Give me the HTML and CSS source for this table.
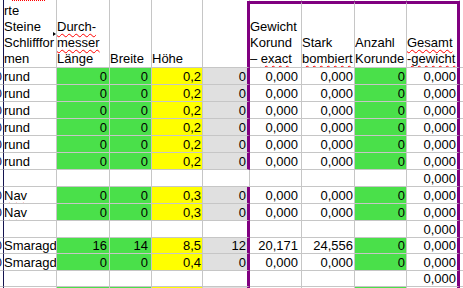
FILE: index.html
```html
<!DOCTYPE html>
<html lang="de">
<head>
<meta charset="utf-8">
<title>Steine</title>
<link rel="stylesheet" href="styles.css">
</head>
<body>
<div class="sheet">
  <!-- clipped strip of the row above -->
  <div class="s edge"></div>
  <div class="s"><div class="wave"></div></div>
  <div class="s"></div><div class="s"></div><div class="s"></div><div class="s"></div>
  <div class="s"></div><div class="s"></div><div class="s"></div><div class="s"></div>
  <div class="s end"></div>

  <!-- header -->
  <div class="h edge"></div>
  <div class="h ha"><div>rte</div><div>Steine</div><div>Schlifffor</div><div>men</div><span class="tri"></span></div>
  <div class="h"><div><span class="sp">Durch-</span></div><div><span class="sp">messer</span></div><div>Länge</div></div>
  <div class="h"><div>Breite</div></div>
  <div class="h"><div>Höhe</div></div>
  <div class="h pr"></div>
  <div class="h pt"><div>Gewicht</div><div>Korund</div><div>– <span class="sp">exact</span></div></div>
  <div class="h pt"><div>Stark</div><div><span class="sp">bombiert</span></div></div>
  <div class="h pt"><div>Anzahl</div><div>Korunde</div></div>
  <div class="h pt pr"><div><span class="sp">Gesamt</span></div><div><span class="sp">-gewicht</span></div></div>
  <div class="h end"></div>

  <!-- rows 1-6 -->
  <div class="c edge n"><span>0</span></div><div class="c">rund</div><div class="c n g p2">0</div><div class="c n g p3">0</div><div class="c n y p1">0,2</div><div class="c n k pr p1">0</div><div class="c n p3">0,000</div><div class="c n p1">0,000</div><div class="c n g p1">0</div><div class="c n pr p1">0,000</div><div class="c end"></div>
  <div class="c edge n"><span>0</span></div><div class="c">rund</div><div class="c n g p2">0</div><div class="c n g p3">0</div><div class="c n y p1">0,2</div><div class="c n k pr p1">0</div><div class="c n p3">0,000</div><div class="c n p1">0,000</div><div class="c n g p1">0</div><div class="c n pr p1">0,000</div><div class="c end"></div>
  <div class="c edge n"><span>0</span></div><div class="c">rund</div><div class="c n g p2">0</div><div class="c n g p3">0</div><div class="c n y p1">0,2</div><div class="c n k pr p1">0</div><div class="c n p3">0,000</div><div class="c n p1">0,000</div><div class="c n g p1">0</div><div class="c n pr p1">0,000</div><div class="c end"></div>
  <div class="c edge n"><span>0</span></div><div class="c">rund</div><div class="c n g p2">0</div><div class="c n g p3">0</div><div class="c n y p1">0,2</div><div class="c n k pr p1">0</div><div class="c n p3">0,000</div><div class="c n p1">0,000</div><div class="c n g p1">0</div><div class="c n pr p1">0,000</div><div class="c end"></div>
  <div class="c edge n"><span>0</span></div><div class="c">rund</div><div class="c n g p2">0</div><div class="c n g p3">0</div><div class="c n y p1">0,2</div><div class="c n k pr p1">0</div><div class="c n p3">0,000</div><div class="c n p1">0,000</div><div class="c n g p1">0</div><div class="c n pr p1">0,000</div><div class="c end"></div>
  <div class="c edge n"><span>0</span></div><div class="c">rund</div><div class="c n g p2">0</div><div class="c n g p3">0</div><div class="c n y p1">0,2</div><div class="c n k pr p1">0</div><div class="c n p3">0,000</div><div class="c n p1">0,000</div><div class="c n g p1">0</div><div class="c n pr p1">0,000</div><div class="c end"></div>

  <!-- row 7 empty -->
  <div class="c edge"></div><div class="c"></div><div class="c"></div><div class="c"></div><div class="c"></div><div class="c"></div><div class="c"></div><div class="c"></div><div class="c"></div><div class="c n pr p1">0,000</div><div class="c end"></div>

  <!-- rows 8-9 -->
  <div class="c edge n"><span>0</span></div><div class="c"><span class="sp">Nav</span></div><div class="c n g p2">0</div><div class="c n g p3">0</div><div class="c n y p1">0,3</div><div class="c n k pr p1">0</div><div class="c n p3">0,000</div><div class="c n p1">0,000</div><div class="c n g p1">0</div><div class="c n pr p1">0,000</div><div class="c end"></div>
  <div class="c edge n"><span>0</span></div><div class="c"><span class="sp">Nav</span></div><div class="c n g p2">0</div><div class="c n g p3">0</div><div class="c n y p1">0,3</div><div class="c n k pr p1">0</div><div class="c n p3">0,000</div><div class="c n p1">0,000</div><div class="c n g p1">0</div><div class="c n pr p1">0,000</div><div class="c end"></div>

  <!-- row 10 empty -->
  <div class="c edge"></div><div class="c"></div><div class="c"></div><div class="c"></div><div class="c"></div><div class="c pr"></div><div class="c"></div><div class="c"></div><div class="c"></div><div class="c n pr p1">0,000</div><div class="c end"></div>

  <!-- rows 11-12 -->
  <div class="c edge n"><span>0</span></div><div class="c">Smaragd</div><div class="c n g p2">16</div><div class="c n g p3">14</div><div class="c n y p1">8,5</div><div class="c n k pr p1">12</div><div class="c n p3">20,171</div><div class="c n p1">24,556</div><div class="c n g p1">0</div><div class="c n pr p1">0,000</div><div class="c end"></div>
  <div class="c edge n"><span>0</span></div><div class="c">Smaragd</div><div class="c n g p2">0</div><div class="c n g p3">0</div><div class="c n y p1">0,4</div><div class="c n k pr p1">0</div><div class="c n p3">0,000</div><div class="c n p1">0,000</div><div class="c n g p1">0</div><div class="c n pr p1">0,000</div><div class="c end"></div>

  <!-- row 13 empty -->
  <div class="c edge"></div><div class="c"></div><div class="c"></div><div class="c"></div><div class="c"></div><div class="c pr"></div><div class="c"></div><div class="c"></div><div class="c"></div><div class="c n pr p1">0,000</div><div class="c end"></div>

  <!-- row 14 (only its top edge is visible) -->
  <div class="c edge"></div><div class="c"></div><div class="c g"></div><div class="c g"></div><div class="c y"></div><div class="c k pr"></div><div class="c"></div><div class="c"></div><div class="c g"></div><div class="c pr"></div><div class="c end"></div>
</div>
</body>
</html>
```

FILE: styles.css
```css
html, body {
  margin: 0;
  padding: 0;
  background: #ffffff;
  overflow: hidden;
}

body {
  width: 463px;
  height: 288px;
  font-family: "Liberation Sans", Arial, sans-serif;
  font-size: 13px;
  color: #000000;
}

.sheet {
  display: grid;
  grid-template-columns: 4px 53px 53px 42px 51px 47px 52px 53px 52px 53px 3px;
  grid-template-rows: 1px 67px repeat(10, 17px) 16px 17px 16px 17px;
}

.sheet > div {
  box-sizing: border-box;
  border-right: 1px solid #c6c6c6;
  border-bottom: 1px solid #c6c6c6;
  overflow: hidden;
  white-space: nowrap;
  min-width: 0;
}

.sheet > .s {
  border-bottom: none;
}

.sheet > .h {
  display: flex;
  flex-direction: column;
  justify-content: flex-end;
  line-height: 16px;
}

.sheet > .c {
  display: flex;
  align-items: flex-end;
  line-height: 14px;
}

.sheet > .n {
  justify-content: flex-end;
}

.sheet > .edge {
  border-right: 1px solid #141450;
  color: #141450;
  padding-right: 1px;
}

.sheet > .end {
  border-right: none;
}

.sheet > .pr {
  border-right: 3px solid #800080;
}

.sheet > .pt {
  border-top: 3px solid #800080;
}

.sheet > .g { background: #4ae04a; }
.sheet > .y { background: #ffff00; }
.sheet > .k { background: #e0e0e0; }

.sheet > .p1 { padding-right: 1px; }
.sheet > .p2 { padding-right: 2px; }
.sheet > .p3 { padding-right: 3px; }

.sheet > .ha {
  position: relative;
}

.tri {
  position: absolute;
  right: 0;
  top: 31px;
  width: 0;
  height: 0;
  border-left: 3px solid #000000;
  border-top: 2px solid transparent;
  border-bottom: 2px solid transparent;
}

.wave {
  margin-left: 8px;
  width: 33px;
  height: 1px;
  background: repeating-linear-gradient(90deg, #ff0000 0 1px, transparent 1px 2px);
}

.sp {
  text-decoration: underline wavy #ff0000;
  text-decoration-thickness: 1px;
  text-underline-offset: 2px;
  text-decoration-skip-ink: none;
}
```
